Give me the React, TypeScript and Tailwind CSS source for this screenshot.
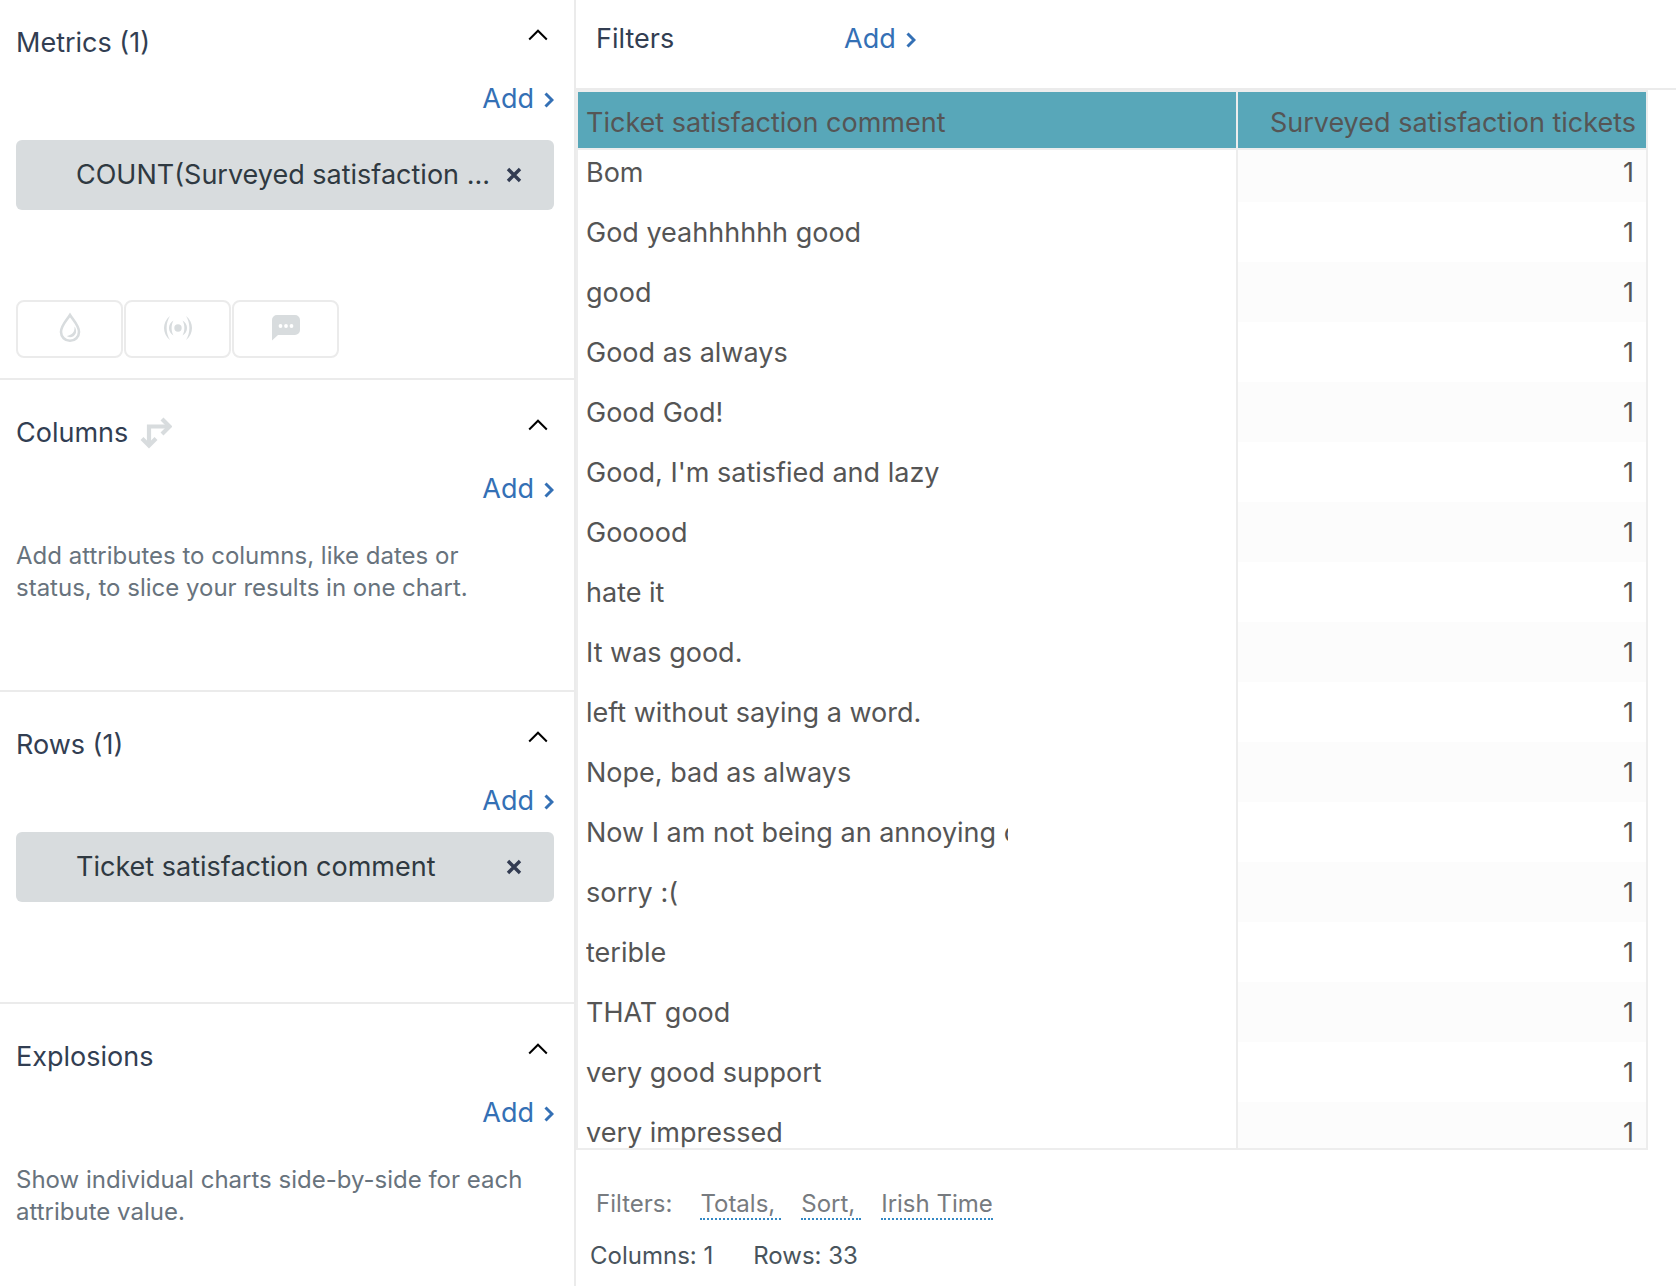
import React from "react";

const comments = [
  "Bom",
  "God yeahhhhhh good",
  "good",
  "Good as always",
  "Good God!",
  "Good, I'm satisfied and lazy",
  "Gooood",
  "hate it",
  "It was good.",
  "left without saying a word.",
  "Nope, bad as always",
  "Now I am not being an annoying customer",
  "sorry :(",
  "terible",
  "THAT good",
  "very good support",
  "very impressed",
];

function AddButton() {
  return (
    <button type="button" className="flex h-[42px] items-center gap-2.5 text-[#3470b5]">
      Add
      <svg width="10" height="16" viewBox="0 0 10 16" fill="none" stroke="currentColor" strokeWidth="3" className="mt-0.5" aria-hidden="true">
        <path d="M1.500 1.500 8 8l-6.500 6.500" />
      </svg>
    </button>
  );
}

function Chip({ label }: { label: string }) {
  return (
    <div className="flex h-[70px] items-center justify-between rounded-md bg-[#d8dcde] pr-8 pl-[60px] text-[#2f3941]">
      <span className="whitespace-nowrap">{label}</span>
      <button type="button" aria-label={`Remove ${label}`} className="text-[#333c52]">
        <svg width="16" height="16" viewBox="0 0 16 16" fill="none" stroke="currentColor" strokeWidth="3.400" aria-hidden="true">
          <path d="M2 2l12 12M14 2 2 14" />
        </svg>
      </button>
    </div>
  );
}

function Hint({ children }: { children: React.ReactNode }) {
  return <p className="mt-[30px] pr-6 text-2xl leading-8 text-[#68737d]">{children}</p>;
}

function SectionHead({ title, icon }: { title: string; icon?: React.ReactNode }) {
  return (
    <>
      <div className="flex items-start justify-between">
        <h2 className="flex h-[42px] items-center gap-3 text-[#323e52]">
          {title}
          {icon}
        </h2>
        <button type="button" aria-label={`Collapse ${title}`} className="mr-1.5 flex h-[26px] items-center text-black">
          <svg width="20" height="12" viewBox="0 0 20 12" fill="none" stroke="currentColor" strokeWidth="2" aria-hidden="true">
            <path d="M1.200 10.500 10 1.700l8.800 8.800" />
          </svg>
        </button>
      </div>
      <div className="mt-3.5 flex justify-end">
        <AddButton />
      </div>
    </>
  );
}

function SwapIcon() {
  return (
    <svg width="32" height="32" viewBox="0 0 32 32" fill="none" stroke="#d8dcde" strokeWidth="4.200" aria-hidden="true">
      <path d="M9 28V9.500H28" />
      <path d="M2 21.500l7 7 7-7" />
      <path d="M22 2l7.500 7.500-7.500 7.500" />
    </svg>
  );
}

function ToolButton({ label, children }: { label: string; children: React.ReactNode }) {
  return (
    <button
      type="button"
      aria-label={label}
      className="flex h-[58px] w-[107px] items-center justify-center rounded-lg border-2 border-[#ebebeb] pb-0.5 text-[#d8dcde]"
    >
      {children}
    </button>
  );
}

export default function App() {
  return (
    <div className="flex h-screen overflow-hidden bg-white font-['Inter','Liberation_Sans',sans-serif] text-[27px] leading-[42px]">
      <aside className="w-[576px] shrink-0 border-r-2 border-[#ebebeb]">
        <section className="border-b-2 border-[#ebebeb] pt-[22px] pr-5 pb-5 pl-4">
          <SectionHead title="Metrics (1)" />
          <div className="mt-5">
            <Chip label="COUNT(Surveyed satisfaction ..." />
          </div>
          <div className="mt-[90px] flex gap-px">
            <ToolButton label="Color">
              <svg width="22" height="32" viewBox="0 0 22 32" aria-hidden="true">
                <path d="M11 3C8 8 2 13.500 2 20a9 8.800 0 0 0 18 0C20 13.500 14 8 11 3Z" fill="none" stroke="currentColor" strokeWidth="2.600" />
                <path d="M15.500 14.500c.5 5.500-2.500 8.500-7.500 9.500 1 1.500 4.500 1.500 6.500.2 3-2 3.500-6.200 1-9.700Z" fill="currentColor" />
              </svg>
            </ToolButton>
            <ToolButton label="Broadcast">
              <svg width="28" height="26" viewBox="0 0 28 26" fill="currentColor" aria-hidden="true">
                <circle cx="14" cy="13" r="3.700" />
                <path d="M6 1C-2 7-2 19 6 25 1.500 18 1.500 8 6 1ZM22 1c8 6 8 18 0 24 4.500-7 4.500-17 0-24Z" />
                <path d="M9.500 5.500C3.500 9 3.500 17 9.500 20.500 7 16 7 10 9.500 5.500ZM18.500 5.500c6 3.500 6 11.500 0 15 2.500-4.500 2.500-10.500 0-15Z" />
              </svg>
            </ToolButton>
            <ToolButton label="Comment">
              <svg width="28" height="26" viewBox="0 0 28 26" aria-hidden="true">
                <path d="M5 0h18a5 5 0 0 1 5 5v10a5 5 0 0 1-5 5H6l-6 5.500V5a5 5 0 0 1 5-5Z" fill="currentColor" />
                <g fill="white">
                  <circle cx="8.500" cy="11" r="1.900" />
                  <circle cx="14" cy="11" r="1.900" />
                  <circle cx="19.500" cy="11" r="1.900" />
                </g>
              </svg>
            </ToolButton>
          </div>
        </section>

        <section className="min-h-[312px] border-b-2 border-[#ebebeb] pt-8 pr-5 pl-4">
          <SectionHead title="Columns" icon={<SwapIcon />} />
          <Hint>Add attributes to columns, like dates or status, to slice your results in one chart.</Hint>
        </section>

        <section className="min-h-[312px] border-b-2 border-[#ebebeb] pt-8 pr-5 pl-4">
          <SectionHead title="Rows (1)" />
          <div className="mt-2.5">
            <Chip label="Ticket satisfaction comment" />
          </div>
        </section>

        <section className="pt-8 pr-5 pl-4">
          <SectionHead title="Explosions" />
          <Hint>Show individual charts side-by-side for each attribute value.</Hint>
        </section>
      </aside>

      <main className="flex min-w-0 flex-1 flex-col">
        <header className="flex h-[90px] shrink-0 items-start border-b-2 border-[#ebebeb] pt-[18px] pl-5">
          <h2 className="w-[248px] text-[#323e52]">Filters</h2>
          <AddButton />
        </header>

        <div className="mr-7 min-h-0 flex-1 overflow-hidden border-2 border-[#ededed] text-[#555]">
          <table className="w-full table-fixed border-separate border-spacing-0">
            <colgroup>
              <col />
              <col className="w-[408px]" />
            </colgroup>
            <thead>
              <tr>
                <th scope="col" className="p-0 text-left font-normal">
                  <div className="relative -mb-2 h-[58px] border-r-2 border-b-2 border-[#ededed] bg-[#58a7b9] pt-2.5 pl-2">
                    Ticket satisfaction comment
                  </div>
                </th>
                <th scope="col" className="p-0 text-right font-normal">
                  <div className="relative -mb-2 h-[58px] border-b-2 border-[#ededed] bg-[#58a7b9] pt-2.5 pr-2.5 whitespace-nowrap">
                    Surveyed satisfaction tickets
                  </div>
                </th>
              </tr>
            </thead>
            <tbody>
              {comments.map((comment) => (
                <tr key={comment} className="group h-[60px]">
                  <td className="border-r-2 border-[#ededed] pt-0.5 pb-0 pl-2">
                    <div className="w-[422px] overflow-hidden whitespace-nowrap">{comment}</div>
                  </td>
                  <td className="pt-0.5 pr-3 pb-0 text-right group-odd:bg-[#fcfcfc]">1</td>
                </tr>
              ))}
            </tbody>
          </table>
        </div>

        <footer className="h-[136px] shrink-0 pt-10 text-2xl leading-7">
          <div className="flex gap-5 pl-5 text-[#777b80]">
            <span className="mr-2">Filters:</span>
            <a href="#totals" className="border-b-2 border-dotted border-[#3388c4] pr-1.5">Totals,</a>
            <a href="#sort" className="border-b-2 border-dotted border-[#3388c4] pr-1.5">Sort,</a>
            <a href="#time" className="border-b-2 border-dotted border-[#3388c4]">Irish Time</a>
          </div>
          <div className="mt-[22px] flex gap-10 pl-3.5 text-[#49545c]">
            <span>Columns: 1</span>
            <span>Rows: 33</span>
          </div>
        </footer>
      </main>
    </div>
  );
}
